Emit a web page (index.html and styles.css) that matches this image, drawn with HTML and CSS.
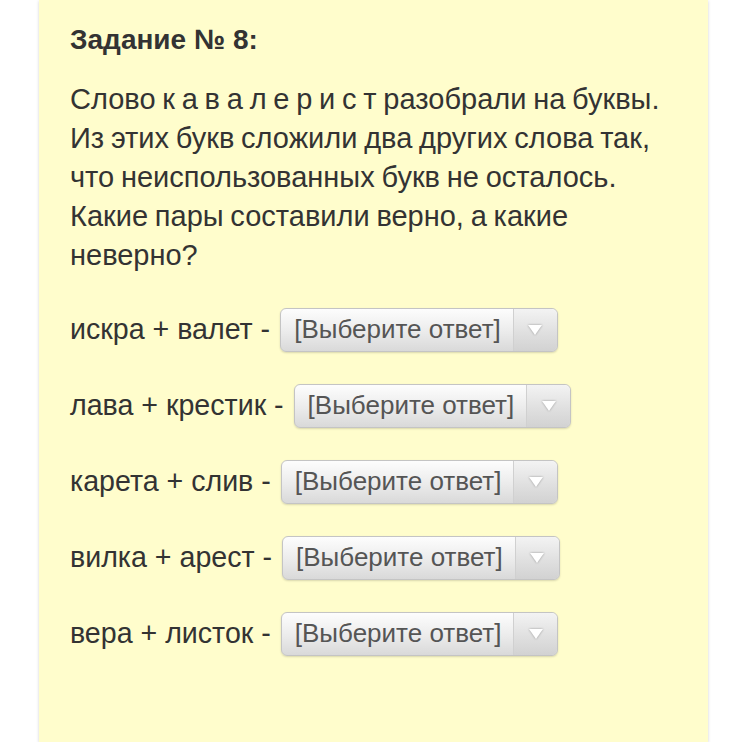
FILE: index.html
```html
<!DOCTYPE html>
<html lang="ru">
<head>
<meta charset="utf-8">
<link rel="stylesheet" href="styles.css">
</head>
<body>
<div class="card">
  <h2 class="title">Задание № 8:</h2>
  <p class="text">Слово к а в а л е р и с т разобрали на буквы. Из этих букв сложили два других слова так, что неиспользованных букв не осталось. Какие пары составили верно, а какие неверно?</p>
  <div class="rows">
    <div class="row"><span class="label">искра + валет -</span><span class="select"><span class="value">[Выберите ответ]</span><span class="arrow"><span class="tri"></span></span></span></div>
    <div class="row"><span class="label">лава + крестик -</span><span class="select"><span class="value">[Выберите ответ]</span><span class="arrow"><span class="tri"></span></span></span></div>
    <div class="row"><span class="label">карета + слив -</span><span class="select"><span class="value">[Выберите ответ]</span><span class="arrow"><span class="tri"></span></span></span></div>
    <div class="row"><span class="label">вилка + арест -</span><span class="select"><span class="value">[Выберите ответ]</span><span class="arrow"><span class="tri"></span></span></span></div>
    <div class="row"><span class="label">вера + листок -</span><span class="select"><span class="value">[Выберите ответ]</span><span class="arrow"><span class="tri"></span></span></span></div>
  </div>
</div>
</body>
</html>
```

FILE: styles.css
```css
html, body {
  margin: 0;
  padding: 0;
  background: #ffffff;
}
body {
  font-family: "Liberation Sans", Arial, Helvetica, sans-serif;
  color: #333333;
}
.card {
  margin-left: 39px;
  width: 669px;
  box-sizing: border-box;
  background: #fffdcc;
  padding: 26px 22px 91px 31px;
  height: 742px;
  box-shadow: 0 1px 3px rgba(0,0,0,0.18);
}
.title {
  margin: 0;
  font-size: 28px;
  line-height: 28px;
  font-weight: bold;
  color: #333;
}
.text {
  margin: 26px 0 0 0;
  font-size: 29px;
  line-height: 39px;
  word-spacing: -1.3px;
}
.rows {
  margin-top: 32px;
  display: flex;
  flex-direction: column;
  gap: 31px;
}
.row {
  display: flex;
  align-items: center;
  gap: 10px;
  font-size: 28.6px;
  height: 45px;
}
.select {
  display: inline-flex;
  align-items: stretch;
  height: 44px;
  box-sizing: border-box;
  border: 1px solid #c4c4c4;
  border-radius: 6px;
  background: linear-gradient(#fdfdfd, #ebebeb 55%, #d9d9d9);
  box-shadow: 0 1px 2px rgba(0,0,0,0.15);
  color: #555;
}
.value {
  display: flex;
  align-items: center;
  padding: 0 12px 0 13px;
  font-size: 26px;
}
.arrow {
  width: 43px;
  border-left: 1px solid #d0d0d0;
  display: flex;
  align-items: center;
  justify-content: center;
  background: linear-gradient(#f3f3f3, #e0e0e0 55%, #d2d2d2);
  border-radius: 0 6px 6px 0;
}
.tri {
  width: 0;
  height: 0;
  border-left: 7px solid transparent;
  border-right: 7px solid transparent;
  border-top: 10px solid #ffffff;
  filter: drop-shadow(0 0 1px rgba(0,0,0,0.35));
}
```
